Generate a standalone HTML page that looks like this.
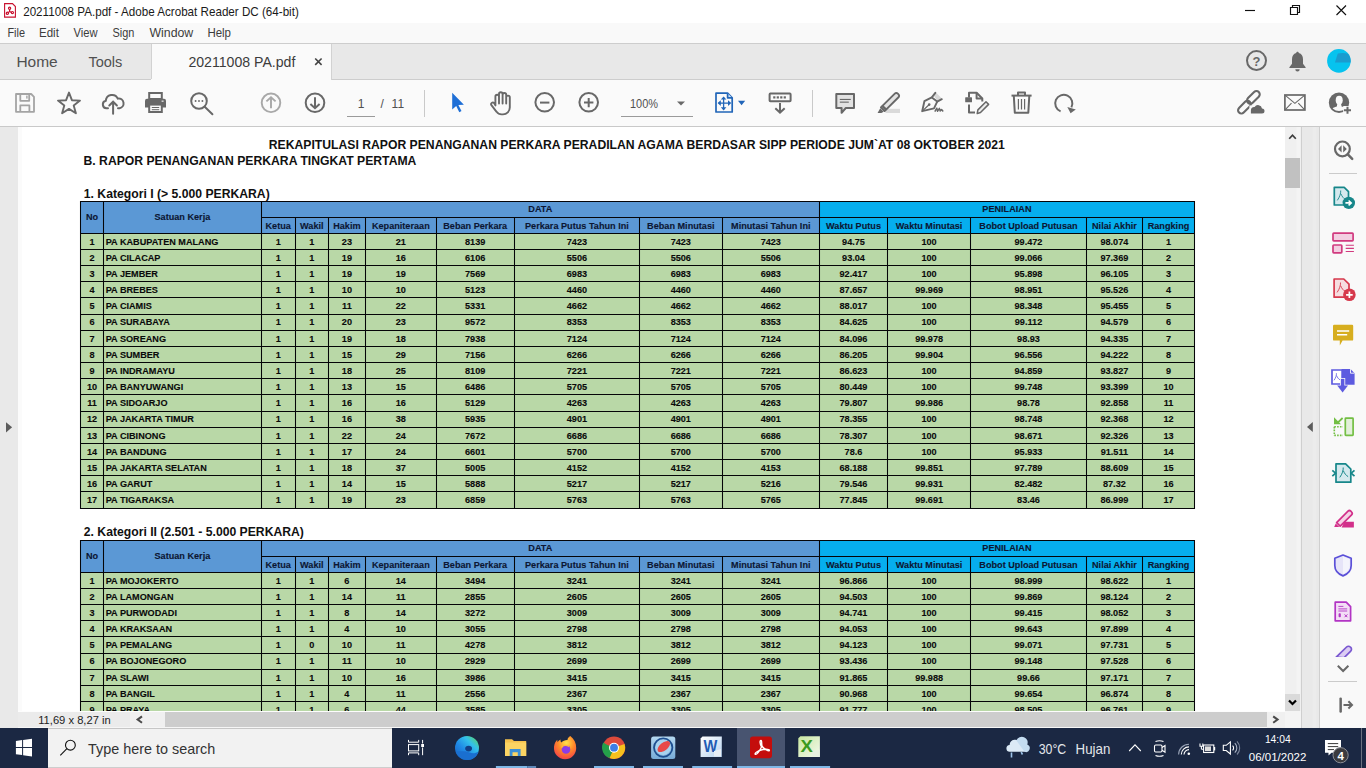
<!DOCTYPE html>
<html><head><meta charset="utf-8"><title>Acrobat</title>
<style>
html,body{margin:0;padding:0;width:1366px;height:768px;overflow:hidden;background:#fff}
svg{display:block}
</style></head><body>
<svg width="1366" height="768" viewBox="0 0 1366 768" font-family='"Liberation Sans", sans-serif'>
<rect x="0" y="0" width="1366" height="23" fill="#ffffff"/><rect x="0" y="23" width="1366" height="20" fill="#f9f9f9"/><rect x="0" y="43" width="1366" height="37" fill="#e8e8e8"/><rect x="0" y="43" width="1366" height="1" fill="#cdcdcd"/><rect x="0" y="79" width="1366" height="1" fill="#cdcdcd"/><rect x="151" y="44" width="181" height="37" fill="#fafafa"/><rect x="151" y="44" width="1" height="36" fill="#d2d2d2"/><rect x="331" y="44" width="1" height="36" fill="#d2d2d2"/><rect x="0" y="80" width="1366" height="46" fill="#fafafa"/><rect x="151" y="79" width="180" height="2" fill="#fafafa"/><rect x="0" y="126" width="1366" height="1" fill="#c9c9c9"/><rect x="0" y="127" width="18" height="601" fill="#e9e9e9"/><rect x="18" y="127" width="1267" height="584" fill="#ffffff"/><rect x="18" y="127" width="4" height="584" fill="#fbfbfb"/><rect x="1285" y="127" width="16" height="584" fill="#f0f0f0"/><rect x="1296.5" y="127" width="3.5" height="584" fill="#f4f4f4"/><rect x="1285" y="158" width="15" height="30" fill="#c1c1c1"/><rect x="1285" y="694" width="15" height="17" fill="#dadada"/><rect x="1301" y="127" width="1" height="601" fill="#cfcfcf"/><rect x="1302" y="127" width="17" height="601" fill="#e9e9e9"/><rect x="1312.5" y="127" width="4" height="601" fill="#ececec"/><rect x="1319" y="127" width="1" height="601" fill="#cfcfcf"/><rect x="1320" y="127" width="46" height="601" fill="#f9f9f9"/><rect x="18" y="711" width="1267" height="1" fill="#fdfdfd"/><rect x="18" y="712" width="112" height="16" fill="#ebebeb"/><rect x="130" y="712" width="35" height="16" fill="#f0f0f0"/><rect x="165" y="712" width="1102" height="15" fill="#cdcdcd"/><rect x="18" y="727" width="1283" height="1" fill="#f6f6f6"/><rect x="1267" y="712" width="18" height="16" fill="#f0f0f0"/><rect x="1285" y="711" width="16" height="17" fill="#f4f4f4"/><rect x="0" y="728" width="1366" height="40" fill="#1b2843"/><rect x="48" y="728" width="344" height="40" fill="#f2f2f2"/><rect x="48" y="728" width="344" height="1" fill="#c6c6c6"/><rect x="48" y="767" width="344" height="1" fill="#cdcdcd"/><g font-weight="700" font-size="12.2" fill="#111"><text x="636.8" y="149.3" text-anchor="middle">REKAPITULASI RAPOR PENANGANAN PERKARA PERADILAN AGAMA BERDASAR SIPP PERIODE JUM`AT 08 OKTOBER 2021</text><text x="83.5" y="164.6">B. RAPOR PENANGANAN PERKARA TINGKAT PERTAMA</text><text x="83.8" y="198">1. Kategori I (&gt; 5.000 PERKARA)</text><text x="83.8" y="535.6">2. Kategori II (2.501 - 5.000 PERKARA)</text></g><rect x="80.5" y="201.3" width="738.8" height="32.0" fill="#5b98d5"/><rect x="819.3" y="201.3" width="375.20000000000005" height="32.0" fill="#06aeee"/><rect x="80.5" y="233.3" width="1114.0" height="274.72" fill="#b9d8a7"/><path d="M80.5 201.5H1195.0M261.3 217.5H1195.0M80.5 233.5H1195.0M80.5 249.5H1195.0M80.5 265.5H1195.0M80.5 281.5H1195.0M80.5 297.5H1195.0M80.5 314.5H1195.0M80.5 330.5H1195.0M80.5 346.5H1195.0M80.5 362.5H1195.0M80.5 378.5H1195.0M80.5 394.5H1195.0M80.5 411.5H1195.0M80.5 427.5H1195.0M80.5 443.5H1195.0M80.5 459.5H1195.0M80.5 475.5H1195.0M80.5 491.5H1195.0M80.5 508.5H1195.0M80.5 201.0V509.0M103.5 201.0V509.0M261.5 201.0V509.0M295.5 217.5V509.0M328.5 217.5V509.0M365.5 217.5V509.0M436.5 217.5V509.0M514.5 217.5V509.0M639.5 217.5V509.0M722.5 217.5V509.0M819.5 201.0V509.0M887.5 217.5V509.0M970.5 217.5V509.0M1086.5 217.5V509.0M1142.5 217.5V509.0M1194.5 201.0V509.0" stroke="#050508" stroke-width="1.05" fill="none"/><g font-family='"Liberation Sans", sans-serif' font-weight="700" font-size="9.15" fill="#0c1633" stroke="#0c1633" stroke-width="0.12"><text x="92.0" y="220.0" text-anchor="middle">No</text><text x="182.4" y="220.0" text-anchor="middle">Satuan Kerja</text><text x="540.3" y="212.2" text-anchor="middle">DATA</text><text x="1006.9" y="212.2" text-anchor="middle">PENILAIAN</text><text x="278.2" y="229.2" text-anchor="middle">Ketua</text><text x="311.8" y="229.2" text-anchor="middle">Wakil</text><text x="346.9" y="229.2" text-anchor="middle">Hakim</text><text x="400.8" y="229.2" text-anchor="middle">Kepaniteraan</text><text x="475.2" y="229.2" text-anchor="middle">Beban Perkara</text><text x="576.9" y="229.2" text-anchor="middle">Perkara Putus Tahun Ini</text><text x="680.8" y="229.2" text-anchor="middle">Beban Minutasi</text><text x="770.8" y="229.2" text-anchor="middle">Minutasi Tahun Ini</text><text x="853.5" y="229.2" text-anchor="middle">Waktu Putus</text><text x="929.1" y="229.2" text-anchor="middle">Waktu Minutasi</text><text x="1028.5" y="229.2" text-anchor="middle">Bobot Upload Putusan</text><text x="1114.4" y="229.2" text-anchor="middle">Nilai Akhir</text><text x="1168.5" y="229.2" text-anchor="middle">Rangking</text></g><g font-family='"Liberation Sans", sans-serif' font-weight="700" font-size="9.15" fill="#0a0a0a" stroke="#0a0a0a" stroke-width="0.12"><text x="92.0" y="244.6" text-anchor="middle">1</text><text x="105.7" y="244.6" text-anchor="start">PA KABUPATEN MALANG</text><text x="278.2" y="244.6" text-anchor="middle">1</text><text x="311.8" y="244.6" text-anchor="middle">1</text><text x="346.9" y="244.6" text-anchor="middle">23</text><text x="400.8" y="244.6" text-anchor="middle">21</text><text x="475.2" y="244.6" text-anchor="middle">8139</text><text x="576.9" y="244.6" text-anchor="middle">7423</text><text x="680.8" y="244.6" text-anchor="middle">7423</text><text x="770.8" y="244.6" text-anchor="middle">7423</text><text x="853.5" y="244.6" text-anchor="middle">94.75</text><text x="929.1" y="244.6" text-anchor="middle">100</text><text x="1028.5" y="244.6" text-anchor="middle">99.472</text><text x="1114.4" y="244.6" text-anchor="middle">98.074</text><text x="1168.5" y="244.6" text-anchor="middle">1</text><text x="92.0" y="260.8" text-anchor="middle">2</text><text x="105.7" y="260.8" text-anchor="start">PA CILACAP</text><text x="278.2" y="260.8" text-anchor="middle">1</text><text x="311.8" y="260.8" text-anchor="middle">1</text><text x="346.9" y="260.8" text-anchor="middle">19</text><text x="400.8" y="260.8" text-anchor="middle">16</text><text x="475.2" y="260.8" text-anchor="middle">6106</text><text x="576.9" y="260.8" text-anchor="middle">5506</text><text x="680.8" y="260.8" text-anchor="middle">5506</text><text x="770.8" y="260.8" text-anchor="middle">5506</text><text x="853.5" y="260.8" text-anchor="middle">93.04</text><text x="929.1" y="260.8" text-anchor="middle">100</text><text x="1028.5" y="260.8" text-anchor="middle">99.066</text><text x="1114.4" y="260.8" text-anchor="middle">97.369</text><text x="1168.5" y="260.8" text-anchor="middle">2</text><text x="92.0" y="276.9" text-anchor="middle">3</text><text x="105.7" y="276.9" text-anchor="start">PA JEMBER</text><text x="278.2" y="276.9" text-anchor="middle">1</text><text x="311.8" y="276.9" text-anchor="middle">1</text><text x="346.9" y="276.9" text-anchor="middle">19</text><text x="400.8" y="276.9" text-anchor="middle">19</text><text x="475.2" y="276.9" text-anchor="middle">7569</text><text x="576.9" y="276.9" text-anchor="middle">6983</text><text x="680.8" y="276.9" text-anchor="middle">6983</text><text x="770.8" y="276.9" text-anchor="middle">6983</text><text x="853.5" y="276.9" text-anchor="middle">92.417</text><text x="929.1" y="276.9" text-anchor="middle">100</text><text x="1028.5" y="276.9" text-anchor="middle">95.898</text><text x="1114.4" y="276.9" text-anchor="middle">96.105</text><text x="1168.5" y="276.9" text-anchor="middle">3</text><text x="92.0" y="293.1" text-anchor="middle">4</text><text x="105.7" y="293.1" text-anchor="start">PA BREBES</text><text x="278.2" y="293.1" text-anchor="middle">1</text><text x="311.8" y="293.1" text-anchor="middle">1</text><text x="346.9" y="293.1" text-anchor="middle">10</text><text x="400.8" y="293.1" text-anchor="middle">10</text><text x="475.2" y="293.1" text-anchor="middle">5123</text><text x="576.9" y="293.1" text-anchor="middle">4460</text><text x="680.8" y="293.1" text-anchor="middle">4460</text><text x="770.8" y="293.1" text-anchor="middle">4460</text><text x="853.5" y="293.1" text-anchor="middle">87.657</text><text x="929.1" y="293.1" text-anchor="middle">99.969</text><text x="1028.5" y="293.1" text-anchor="middle">98.951</text><text x="1114.4" y="293.1" text-anchor="middle">95.526</text><text x="1168.5" y="293.1" text-anchor="middle">4</text><text x="92.0" y="309.2" text-anchor="middle">5</text><text x="105.7" y="309.2" text-anchor="start">PA CIAMIS</text><text x="278.2" y="309.2" text-anchor="middle">1</text><text x="311.8" y="309.2" text-anchor="middle">1</text><text x="346.9" y="309.2" text-anchor="middle">11</text><text x="400.8" y="309.2" text-anchor="middle">22</text><text x="475.2" y="309.2" text-anchor="middle">5331</text><text x="576.9" y="309.2" text-anchor="middle">4662</text><text x="680.8" y="309.2" text-anchor="middle">4662</text><text x="770.8" y="309.2" text-anchor="middle">4662</text><text x="853.5" y="309.2" text-anchor="middle">88.017</text><text x="929.1" y="309.2" text-anchor="middle">100</text><text x="1028.5" y="309.2" text-anchor="middle">98.348</text><text x="1114.4" y="309.2" text-anchor="middle">95.455</text><text x="1168.5" y="309.2" text-anchor="middle">5</text><text x="92.0" y="325.4" text-anchor="middle">6</text><text x="105.7" y="325.4" text-anchor="start">PA SURABAYA</text><text x="278.2" y="325.4" text-anchor="middle">1</text><text x="311.8" y="325.4" text-anchor="middle">1</text><text x="346.9" y="325.4" text-anchor="middle">20</text><text x="400.8" y="325.4" text-anchor="middle">23</text><text x="475.2" y="325.4" text-anchor="middle">9572</text><text x="576.9" y="325.4" text-anchor="middle">8353</text><text x="680.8" y="325.4" text-anchor="middle">8353</text><text x="770.8" y="325.4" text-anchor="middle">8353</text><text x="853.5" y="325.4" text-anchor="middle">84.625</text><text x="929.1" y="325.4" text-anchor="middle">100</text><text x="1028.5" y="325.4" text-anchor="middle">99.112</text><text x="1114.4" y="325.4" text-anchor="middle">94.579</text><text x="1168.5" y="325.4" text-anchor="middle">6</text><text x="92.0" y="341.6" text-anchor="middle">7</text><text x="105.7" y="341.6" text-anchor="start">PA SOREANG</text><text x="278.2" y="341.6" text-anchor="middle">1</text><text x="311.8" y="341.6" text-anchor="middle">1</text><text x="346.9" y="341.6" text-anchor="middle">19</text><text x="400.8" y="341.6" text-anchor="middle">18</text><text x="475.2" y="341.6" text-anchor="middle">7938</text><text x="576.9" y="341.6" text-anchor="middle">7124</text><text x="680.8" y="341.6" text-anchor="middle">7124</text><text x="770.8" y="341.6" text-anchor="middle">7124</text><text x="853.5" y="341.6" text-anchor="middle">84.096</text><text x="929.1" y="341.6" text-anchor="middle">99.978</text><text x="1028.5" y="341.6" text-anchor="middle">98.93</text><text x="1114.4" y="341.6" text-anchor="middle">94.335</text><text x="1168.5" y="341.6" text-anchor="middle">7</text><text x="92.0" y="357.7" text-anchor="middle">8</text><text x="105.7" y="357.7" text-anchor="start">PA SUMBER</text><text x="278.2" y="357.7" text-anchor="middle">1</text><text x="311.8" y="357.7" text-anchor="middle">1</text><text x="346.9" y="357.7" text-anchor="middle">15</text><text x="400.8" y="357.7" text-anchor="middle">29</text><text x="475.2" y="357.7" text-anchor="middle">7156</text><text x="576.9" y="357.7" text-anchor="middle">6266</text><text x="680.8" y="357.7" text-anchor="middle">6266</text><text x="770.8" y="357.7" text-anchor="middle">6266</text><text x="853.5" y="357.7" text-anchor="middle">86.205</text><text x="929.1" y="357.7" text-anchor="middle">99.904</text><text x="1028.5" y="357.7" text-anchor="middle">96.556</text><text x="1114.4" y="357.7" text-anchor="middle">94.222</text><text x="1168.5" y="357.7" text-anchor="middle">8</text><text x="92.0" y="373.9" text-anchor="middle">9</text><text x="105.7" y="373.9" text-anchor="start">PA INDRAMAYU</text><text x="278.2" y="373.9" text-anchor="middle">1</text><text x="311.8" y="373.9" text-anchor="middle">1</text><text x="346.9" y="373.9" text-anchor="middle">18</text><text x="400.8" y="373.9" text-anchor="middle">25</text><text x="475.2" y="373.9" text-anchor="middle">8109</text><text x="576.9" y="373.9" text-anchor="middle">7221</text><text x="680.8" y="373.9" text-anchor="middle">7221</text><text x="770.8" y="373.9" text-anchor="middle">7221</text><text x="853.5" y="373.9" text-anchor="middle">86.623</text><text x="929.1" y="373.9" text-anchor="middle">100</text><text x="1028.5" y="373.9" text-anchor="middle">94.859</text><text x="1114.4" y="373.9" text-anchor="middle">93.827</text><text x="1168.5" y="373.9" text-anchor="middle">9</text><text x="92.0" y="390.0" text-anchor="middle">10</text><text x="105.7" y="390.0" text-anchor="start">PA BANYUWANGI</text><text x="278.2" y="390.0" text-anchor="middle">1</text><text x="311.8" y="390.0" text-anchor="middle">1</text><text x="346.9" y="390.0" text-anchor="middle">13</text><text x="400.8" y="390.0" text-anchor="middle">15</text><text x="475.2" y="390.0" text-anchor="middle">6486</text><text x="576.9" y="390.0" text-anchor="middle">5705</text><text x="680.8" y="390.0" text-anchor="middle">5705</text><text x="770.8" y="390.0" text-anchor="middle">5705</text><text x="853.5" y="390.0" text-anchor="middle">80.449</text><text x="929.1" y="390.0" text-anchor="middle">100</text><text x="1028.5" y="390.0" text-anchor="middle">99.748</text><text x="1114.4" y="390.0" text-anchor="middle">93.399</text><text x="1168.5" y="390.0" text-anchor="middle">10</text><text x="92.0" y="406.2" text-anchor="middle">11</text><text x="105.7" y="406.2" text-anchor="start">PA SIDOARJO</text><text x="278.2" y="406.2" text-anchor="middle">1</text><text x="311.8" y="406.2" text-anchor="middle">1</text><text x="346.9" y="406.2" text-anchor="middle">16</text><text x="400.8" y="406.2" text-anchor="middle">16</text><text x="475.2" y="406.2" text-anchor="middle">5129</text><text x="576.9" y="406.2" text-anchor="middle">4263</text><text x="680.8" y="406.2" text-anchor="middle">4263</text><text x="770.8" y="406.2" text-anchor="middle">4263</text><text x="853.5" y="406.2" text-anchor="middle">79.807</text><text x="929.1" y="406.2" text-anchor="middle">99.986</text><text x="1028.5" y="406.2" text-anchor="middle">98.78</text><text x="1114.4" y="406.2" text-anchor="middle">92.858</text><text x="1168.5" y="406.2" text-anchor="middle">11</text><text x="92.0" y="422.4" text-anchor="middle">12</text><text x="105.7" y="422.4" text-anchor="start">PA JAKARTA TIMUR</text><text x="278.2" y="422.4" text-anchor="middle">1</text><text x="311.8" y="422.4" text-anchor="middle">1</text><text x="346.9" y="422.4" text-anchor="middle">16</text><text x="400.8" y="422.4" text-anchor="middle">38</text><text x="475.2" y="422.4" text-anchor="middle">5935</text><text x="576.9" y="422.4" text-anchor="middle">4901</text><text x="680.8" y="422.4" text-anchor="middle">4901</text><text x="770.8" y="422.4" text-anchor="middle">4901</text><text x="853.5" y="422.4" text-anchor="middle">78.355</text><text x="929.1" y="422.4" text-anchor="middle">100</text><text x="1028.5" y="422.4" text-anchor="middle">98.748</text><text x="1114.4" y="422.4" text-anchor="middle">92.368</text><text x="1168.5" y="422.4" text-anchor="middle">12</text><text x="92.0" y="438.5" text-anchor="middle">13</text><text x="105.7" y="438.5" text-anchor="start">PA CIBINONG</text><text x="278.2" y="438.5" text-anchor="middle">1</text><text x="311.8" y="438.5" text-anchor="middle">1</text><text x="346.9" y="438.5" text-anchor="middle">22</text><text x="400.8" y="438.5" text-anchor="middle">24</text><text x="475.2" y="438.5" text-anchor="middle">7672</text><text x="576.9" y="438.5" text-anchor="middle">6686</text><text x="680.8" y="438.5" text-anchor="middle">6686</text><text x="770.8" y="438.5" text-anchor="middle">6686</text><text x="853.5" y="438.5" text-anchor="middle">78.307</text><text x="929.1" y="438.5" text-anchor="middle">100</text><text x="1028.5" y="438.5" text-anchor="middle">98.671</text><text x="1114.4" y="438.5" text-anchor="middle">92.326</text><text x="1168.5" y="438.5" text-anchor="middle">13</text><text x="92.0" y="454.7" text-anchor="middle">14</text><text x="105.7" y="454.7" text-anchor="start">PA BANDUNG</text><text x="278.2" y="454.7" text-anchor="middle">1</text><text x="311.8" y="454.7" text-anchor="middle">1</text><text x="346.9" y="454.7" text-anchor="middle">17</text><text x="400.8" y="454.7" text-anchor="middle">24</text><text x="475.2" y="454.7" text-anchor="middle">6601</text><text x="576.9" y="454.7" text-anchor="middle">5700</text><text x="680.8" y="454.7" text-anchor="middle">5700</text><text x="770.8" y="454.7" text-anchor="middle">5700</text><text x="853.5" y="454.7" text-anchor="middle">78.6</text><text x="929.1" y="454.7" text-anchor="middle">100</text><text x="1028.5" y="454.7" text-anchor="middle">95.933</text><text x="1114.4" y="454.7" text-anchor="middle">91.511</text><text x="1168.5" y="454.7" text-anchor="middle">14</text><text x="92.0" y="470.8" text-anchor="middle">15</text><text x="105.7" y="470.8" text-anchor="start">PA JAKARTA SELATAN</text><text x="278.2" y="470.8" text-anchor="middle">1</text><text x="311.8" y="470.8" text-anchor="middle">1</text><text x="346.9" y="470.8" text-anchor="middle">18</text><text x="400.8" y="470.8" text-anchor="middle">37</text><text x="475.2" y="470.8" text-anchor="middle">5005</text><text x="576.9" y="470.8" text-anchor="middle">4152</text><text x="680.8" y="470.8" text-anchor="middle">4152</text><text x="770.8" y="470.8" text-anchor="middle">4153</text><text x="853.5" y="470.8" text-anchor="middle">68.188</text><text x="929.1" y="470.8" text-anchor="middle">99.851</text><text x="1028.5" y="470.8" text-anchor="middle">97.789</text><text x="1114.4" y="470.8" text-anchor="middle">88.609</text><text x="1168.5" y="470.8" text-anchor="middle">15</text><text x="92.0" y="487.0" text-anchor="middle">16</text><text x="105.7" y="487.0" text-anchor="start">PA GARUT</text><text x="278.2" y="487.0" text-anchor="middle">1</text><text x="311.8" y="487.0" text-anchor="middle">1</text><text x="346.9" y="487.0" text-anchor="middle">14</text><text x="400.8" y="487.0" text-anchor="middle">15</text><text x="475.2" y="487.0" text-anchor="middle">5888</text><text x="576.9" y="487.0" text-anchor="middle">5217</text><text x="680.8" y="487.0" text-anchor="middle">5217</text><text x="770.8" y="487.0" text-anchor="middle">5216</text><text x="853.5" y="487.0" text-anchor="middle">79.546</text><text x="929.1" y="487.0" text-anchor="middle">99.931</text><text x="1028.5" y="487.0" text-anchor="middle">82.482</text><text x="1114.4" y="487.0" text-anchor="middle">87.32</text><text x="1168.5" y="487.0" text-anchor="middle">16</text><text x="92.0" y="503.2" text-anchor="middle">17</text><text x="105.7" y="503.2" text-anchor="start">PA TIGARAKSA</text><text x="278.2" y="503.2" text-anchor="middle">1</text><text x="311.8" y="503.2" text-anchor="middle">1</text><text x="346.9" y="503.2" text-anchor="middle">19</text><text x="400.8" y="503.2" text-anchor="middle">23</text><text x="475.2" y="503.2" text-anchor="middle">6859</text><text x="576.9" y="503.2" text-anchor="middle">5763</text><text x="680.8" y="503.2" text-anchor="middle">5763</text><text x="770.8" y="503.2" text-anchor="middle">5765</text><text x="853.5" y="503.2" text-anchor="middle">77.845</text><text x="929.1" y="503.2" text-anchor="middle">99.691</text><text x="1028.5" y="503.2" text-anchor="middle">83.46</text><text x="1114.4" y="503.2" text-anchor="middle">86.999</text><text x="1168.5" y="503.2" text-anchor="middle">17</text></g><svg x="0" y="127" width="1285" height="584" overflow="hidden"><g transform="translate(0,-127)"><rect x="80.5" y="540.3" width="738.8" height="32.0" fill="#5b98d5"/><rect x="819.3" y="540.3" width="375.20000000000005" height="32.0" fill="#06aeee"/><rect x="80.5" y="572.3" width="1114.0" height="145.44000000000005" fill="#b9d8a7"/><path d="M80.5 540.5H1195.0M261.3 556.5H1195.0M80.5 572.5H1195.0M80.5 588.5H1195.0M80.5 604.5H1195.0M80.5 620.5H1195.0M80.5 636.5H1195.0M80.5 653.5H1195.0M80.5 669.5H1195.0M80.5 685.5H1195.0M80.5 701.5H1195.0M80.5 717.5H1195.0M80.5 540.0V718.0M103.5 540.0V718.0M261.5 540.0V718.0M295.5 556.5V718.0M328.5 556.5V718.0M365.5 556.5V718.0M436.5 556.5V718.0M514.5 556.5V718.0M639.5 556.5V718.0M722.5 556.5V718.0M819.5 540.0V718.0M887.5 556.5V718.0M970.5 556.5V718.0M1086.5 556.5V718.0M1142.5 556.5V718.0M1194.5 540.0V718.0" stroke="#050508" stroke-width="1.05" fill="none"/><g font-family='"Liberation Sans", sans-serif' font-weight="700" font-size="9.15" fill="#0c1633" stroke="#0c1633" stroke-width="0.12"><text x="92.0" y="559.0" text-anchor="middle">No</text><text x="182.4" y="559.0" text-anchor="middle">Satuan Kerja</text><text x="540.3" y="551.2" text-anchor="middle">DATA</text><text x="1006.9" y="551.2" text-anchor="middle">PENILAIAN</text><text x="278.2" y="568.2" text-anchor="middle">Ketua</text><text x="311.8" y="568.2" text-anchor="middle">Wakil</text><text x="346.9" y="568.2" text-anchor="middle">Hakim</text><text x="400.8" y="568.2" text-anchor="middle">Kepaniteraan</text><text x="475.2" y="568.2" text-anchor="middle">Beban Perkara</text><text x="576.9" y="568.2" text-anchor="middle">Perkara Putus Tahun Ini</text><text x="680.8" y="568.2" text-anchor="middle">Beban Minutasi</text><text x="770.8" y="568.2" text-anchor="middle">Minutasi Tahun Ini</text><text x="853.5" y="568.2" text-anchor="middle">Waktu Putus</text><text x="929.1" y="568.2" text-anchor="middle">Waktu Minutasi</text><text x="1028.5" y="568.2" text-anchor="middle">Bobot Upload Putusan</text><text x="1114.4" y="568.2" text-anchor="middle">Nilai Akhir</text><text x="1168.5" y="568.2" text-anchor="middle">Rangking</text></g><g font-family='"Liberation Sans", sans-serif' font-weight="700" font-size="9.15" fill="#0a0a0a" stroke="#0a0a0a" stroke-width="0.12"><text x="92.0" y="583.6" text-anchor="middle">1</text><text x="105.7" y="583.6" text-anchor="start">PA MOJOKERTO</text><text x="278.2" y="583.6" text-anchor="middle">1</text><text x="311.8" y="583.6" text-anchor="middle">1</text><text x="346.9" y="583.6" text-anchor="middle">6</text><text x="400.8" y="583.6" text-anchor="middle">14</text><text x="475.2" y="583.6" text-anchor="middle">3494</text><text x="576.9" y="583.6" text-anchor="middle">3241</text><text x="680.8" y="583.6" text-anchor="middle">3241</text><text x="770.8" y="583.6" text-anchor="middle">3241</text><text x="853.5" y="583.6" text-anchor="middle">96.866</text><text x="929.1" y="583.6" text-anchor="middle">100</text><text x="1028.5" y="583.6" text-anchor="middle">98.999</text><text x="1114.4" y="583.6" text-anchor="middle">98.622</text><text x="1168.5" y="583.6" text-anchor="middle">1</text><text x="92.0" y="599.8" text-anchor="middle">2</text><text x="105.7" y="599.8" text-anchor="start">PA LAMONGAN</text><text x="278.2" y="599.8" text-anchor="middle">1</text><text x="311.8" y="599.8" text-anchor="middle">1</text><text x="346.9" y="599.8" text-anchor="middle">14</text><text x="400.8" y="599.8" text-anchor="middle">11</text><text x="475.2" y="599.8" text-anchor="middle">2855</text><text x="576.9" y="599.8" text-anchor="middle">2605</text><text x="680.8" y="599.8" text-anchor="middle">2605</text><text x="770.8" y="599.8" text-anchor="middle">2605</text><text x="853.5" y="599.8" text-anchor="middle">94.503</text><text x="929.1" y="599.8" text-anchor="middle">100</text><text x="1028.5" y="599.8" text-anchor="middle">99.869</text><text x="1114.4" y="599.8" text-anchor="middle">98.124</text><text x="1168.5" y="599.8" text-anchor="middle">2</text><text x="92.0" y="615.9" text-anchor="middle">3</text><text x="105.7" y="615.9" text-anchor="start">PA PURWODADI</text><text x="278.2" y="615.9" text-anchor="middle">1</text><text x="311.8" y="615.9" text-anchor="middle">1</text><text x="346.9" y="615.9" text-anchor="middle">8</text><text x="400.8" y="615.9" text-anchor="middle">14</text><text x="475.2" y="615.9" text-anchor="middle">3272</text><text x="576.9" y="615.9" text-anchor="middle">3009</text><text x="680.8" y="615.9" text-anchor="middle">3009</text><text x="770.8" y="615.9" text-anchor="middle">3009</text><text x="853.5" y="615.9" text-anchor="middle">94.741</text><text x="929.1" y="615.9" text-anchor="middle">100</text><text x="1028.5" y="615.9" text-anchor="middle">99.415</text><text x="1114.4" y="615.9" text-anchor="middle">98.052</text><text x="1168.5" y="615.9" text-anchor="middle">3</text><text x="92.0" y="632.1" text-anchor="middle">4</text><text x="105.7" y="632.1" text-anchor="start">PA KRAKSAAN</text><text x="278.2" y="632.1" text-anchor="middle">1</text><text x="311.8" y="632.1" text-anchor="middle">1</text><text x="346.9" y="632.1" text-anchor="middle">4</text><text x="400.8" y="632.1" text-anchor="middle">10</text><text x="475.2" y="632.1" text-anchor="middle">3055</text><text x="576.9" y="632.1" text-anchor="middle">2798</text><text x="680.8" y="632.1" text-anchor="middle">2798</text><text x="770.8" y="632.1" text-anchor="middle">2798</text><text x="853.5" y="632.1" text-anchor="middle">94.053</text><text x="929.1" y="632.1" text-anchor="middle">100</text><text x="1028.5" y="632.1" text-anchor="middle">99.643</text><text x="1114.4" y="632.1" text-anchor="middle">97.899</text><text x="1168.5" y="632.1" text-anchor="middle">4</text><text x="92.0" y="648.2" text-anchor="middle">5</text><text x="105.7" y="648.2" text-anchor="start">PA PEMALANG</text><text x="278.2" y="648.2" text-anchor="middle">1</text><text x="311.8" y="648.2" text-anchor="middle">0</text><text x="346.9" y="648.2" text-anchor="middle">10</text><text x="400.8" y="648.2" text-anchor="middle">11</text><text x="475.2" y="648.2" text-anchor="middle">4278</text><text x="576.9" y="648.2" text-anchor="middle">3812</text><text x="680.8" y="648.2" text-anchor="middle">3812</text><text x="770.8" y="648.2" text-anchor="middle">3812</text><text x="853.5" y="648.2" text-anchor="middle">94.123</text><text x="929.1" y="648.2" text-anchor="middle">100</text><text x="1028.5" y="648.2" text-anchor="middle">99.071</text><text x="1114.4" y="648.2" text-anchor="middle">97.731</text><text x="1168.5" y="648.2" text-anchor="middle">5</text><text x="92.0" y="664.4" text-anchor="middle">6</text><text x="105.7" y="664.4" text-anchor="start">PA BOJONEGORO</text><text x="278.2" y="664.4" text-anchor="middle">1</text><text x="311.8" y="664.4" text-anchor="middle">1</text><text x="346.9" y="664.4" text-anchor="middle">11</text><text x="400.8" y="664.4" text-anchor="middle">10</text><text x="475.2" y="664.4" text-anchor="middle">2929</text><text x="576.9" y="664.4" text-anchor="middle">2699</text><text x="680.8" y="664.4" text-anchor="middle">2699</text><text x="770.8" y="664.4" text-anchor="middle">2699</text><text x="853.5" y="664.4" text-anchor="middle">93.436</text><text x="929.1" y="664.4" text-anchor="middle">100</text><text x="1028.5" y="664.4" text-anchor="middle">99.148</text><text x="1114.4" y="664.4" text-anchor="middle">97.528</text><text x="1168.5" y="664.4" text-anchor="middle">6</text><text x="92.0" y="680.6" text-anchor="middle">7</text><text x="105.7" y="680.6" text-anchor="start">PA SLAWI</text><text x="278.2" y="680.6" text-anchor="middle">1</text><text x="311.8" y="680.6" text-anchor="middle">1</text><text x="346.9" y="680.6" text-anchor="middle">10</text><text x="400.8" y="680.6" text-anchor="middle">16</text><text x="475.2" y="680.6" text-anchor="middle">3986</text><text x="576.9" y="680.6" text-anchor="middle">3415</text><text x="680.8" y="680.6" text-anchor="middle">3415</text><text x="770.8" y="680.6" text-anchor="middle">3415</text><text x="853.5" y="680.6" text-anchor="middle">91.865</text><text x="929.1" y="680.6" text-anchor="middle">99.988</text><text x="1028.5" y="680.6" text-anchor="middle">99.66</text><text x="1114.4" y="680.6" text-anchor="middle">97.171</text><text x="1168.5" y="680.6" text-anchor="middle">7</text><text x="92.0" y="696.7" text-anchor="middle">8</text><text x="105.7" y="696.7" text-anchor="start">PA BANGIL</text><text x="278.2" y="696.7" text-anchor="middle">1</text><text x="311.8" y="696.7" text-anchor="middle">1</text><text x="346.9" y="696.7" text-anchor="middle">4</text><text x="400.8" y="696.7" text-anchor="middle">11</text><text x="475.2" y="696.7" text-anchor="middle">2556</text><text x="576.9" y="696.7" text-anchor="middle">2367</text><text x="680.8" y="696.7" text-anchor="middle">2367</text><text x="770.8" y="696.7" text-anchor="middle">2367</text><text x="853.5" y="696.7" text-anchor="middle">90.968</text><text x="929.1" y="696.7" text-anchor="middle">100</text><text x="1028.5" y="696.7" text-anchor="middle">99.654</text><text x="1114.4" y="696.7" text-anchor="middle">96.874</text><text x="1168.5" y="696.7" text-anchor="middle">8</text><text x="92.0" y="712.9" text-anchor="middle">9</text><text x="105.7" y="712.9" text-anchor="start">PA PRAYA</text><text x="278.2" y="712.9" text-anchor="middle">1</text><text x="311.8" y="712.9" text-anchor="middle">1</text><text x="346.9" y="712.9" text-anchor="middle">6</text><text x="400.8" y="712.9" text-anchor="middle">44</text><text x="475.2" y="712.9" text-anchor="middle">3585</text><text x="576.9" y="712.9" text-anchor="middle">3305</text><text x="680.8" y="712.9" text-anchor="middle">3305</text><text x="770.8" y="712.9" text-anchor="middle">3305</text><text x="853.5" y="712.9" text-anchor="middle">91.777</text><text x="929.1" y="712.9" text-anchor="middle">100</text><text x="1028.5" y="712.9" text-anchor="middle">98.505</text><text x="1114.4" y="712.9" text-anchor="middle">96.761</text><text x="1168.5" y="712.9" text-anchor="middle">9</text></g></g></svg><g fill="none" stroke="#c8102e" stroke-width="1.1"><path d="M4.6 3.6H12.5L15.4 6.5V17.1H4.6Z"/></g><g fill="none" stroke="#c8102e" stroke-width="1.2"><circle cx="9.6" cy="8.3" r="1.1"/><circle cx="7.4" cy="13.2" r="1.1"/><circle cx="12.4" cy="12.6" r="1.1"/><path d="M9.6 9.4V11.5L8.2 12.6M9.6 11.5L11.4 12.4"/></g><g stroke="#111" stroke-width="1.15" fill="none"><path d="M1245 10.5H1255"/><path d="M1290.5 7.5h7v7h-7z M1292.5 7.5V5.5h7v7h-2"/><path d="M1336.5 5.5L1346 15M1346 5.5L1336.5 15"/></g><g stroke="#444" stroke-width="1.6"><path d="M315.2 58.5L321.6 64.9M321.6 58.5L315.2 64.9"/></g><circle cx="1256.5" cy="60.6" r="9.5" fill="none" stroke="#686868" stroke-width="2"/><text x="1256.5" y="65.6" font-size="13" font-weight="700" fill="#686868" text-anchor="middle">?</text><path d="M1297.5 51.8c-0.8 0-1.3 0.6-1.3 1.3c-2.8 0.7-4.2 3.2-4.2 6.2v4.5l-2.6 3.4v0.9h16.2v-0.9l-2.6-3.4v-4.5c0-3-1.4-5.5-4.2-6.2c0-0.7-0.5-1.3-1.3-1.3zM1295.3 69.2a2.2 2.2 0 0 0 4.4 0z" fill="#686868"/><circle cx="1338.9" cy="60.9" r="11.8" fill="#06c3ef"/><path d="M1335 62.5L1337.8 53.6Q1343 52.2 1348 53.8A11.8 11.8 0 0 1 1350.6 62.5Z" fill="#1a9ccf"/><g fill="none" stroke="#a4a4a4" stroke-width="1.8" stroke-linejoin="round"><path d="M16 94H31.2L34 96.8V111.8H16Z"/><path d="M20.3 94V100.8H29.2V94"/><path d="M20.3 111.8V105.4H29.4V111.8"/></g><rect x="26.2" y="95.6" width="1.4" height="3" fill="#a4a4a4"/><path d="M69 92.6L71.9 100.2L80 100.6L73.7 105.6L75.9 113.3L69 108.9L62.1 113.3L64.3 105.6L58 100.6L66.1 100.2Z" fill="none" stroke="#686868" stroke-width="1.9" stroke-linejoin="round"/><g fill="none" stroke="#686868" stroke-width="2" stroke-linecap="round"><path d="M108 108.3H106.5A3.8 3.8 0 0 1 105.8 100.8A6.3 6.3 0 0 1 117.8 98.6A4.9 4.9 0 0 1 119.5 108.3H118"/><path d="M113.1 113.8V101.8M109.3 105.5L113.1 101.7L116.9 105.5"/></g><rect x="149.2" y="93" width="12.6" height="6" fill="none" stroke="#686868" stroke-width="2"/><path d="M147 98.8h17a2 2 0 0 1 2 2v6.6h-20.6h-0.4v-6.6a2 2 0 0 1 2-2z" fill="#686868"/><rect x="149.2" y="104.6" width="12.6" height="7.4" fill="#fafafa" stroke="#686868" stroke-width="2"/><g fill="#686868"><rect x="151.8" y="107" width="7.4" height="1"/><rect x="151.8" y="109.2" width="7.4" height="1"/></g><rect x="161.6" y="100.6" width="2" height="1.1" fill="#fafafa"/><g fill="none" stroke="#686868" stroke-width="2"><circle cx="199" cy="101" r="7.8"/><path d="M204.7 106.8L212.4 114.2" stroke-linecap="round"/></g><g fill="#686868"><circle cx="195.6" cy="101" r="0.95"/><circle cx="199" cy="101" r="0.95"/><circle cx="202.4" cy="101" r="0.95"/></g><g fill="none" stroke="#a8a8a8" stroke-width="1.9"><circle cx="271" cy="102.8" r="9.3"/><path d="M271 108.2V97.2M266.4 101.4L271 97.2L275.6 101.4"/></g><g fill="none" stroke="#686868" stroke-width="2"><circle cx="315" cy="102.8" r="9.3"/><path d="M315 97.2V108.2M310.4 104L315 108.2L319.6 104"/></g><rect x="347" y="116" width="28" height="1" fill="#9a9a9a"/><rect x="424" y="90" width="1" height="27" fill="#c9c9c9"/><rect x="812" y="90" width="1" height="27" fill="#c9c9c9"/><path d="M452.2 92.7L463.9 104.7L458.4 104.9L461.5 111.1L459.3 112.2L456.2 106.1L452.2 109.6Z" fill="#1f6fd6"/><path d="M495.4 105.4V96.6a1.8 1.8 0 0 1 3.6 0V103.5V94a1.8 1.8 0 0 1 3.6 0V103.5V94.8a1.8 1.8 0 0 1 3.6 0V103.5V97.4a1.8 1.8 0 0 1 3.6 0V107.6a6.8 6.8 0 0 1-6.8 6.8h-1.4c-2.3 0-3.9-1-5-2.6l-5.2-6.6a1.75 1.75 0 0 1 2.7-2.2z" fill="none" stroke="#686868" stroke-width="1.9" stroke-linejoin="round"/><g fill="none" stroke="#686868" stroke-width="2"><circle cx="544.7" cy="102.3" r="9.3"/><path d="M540 102.6H549.4"/><circle cx="588.7" cy="102.3" r="9.3"/><path d="M584 102.6H593.4M588.7 97.9V107.3"/></g><path d="M677 101.6H685L681 105.6Z" fill="#686868"/><rect x="621" y="116" width="72" height="1" fill="#9a9a9a"/><g fill="none" stroke="#2165b8" stroke-width="1.7" stroke-linejoin="round"><path d="M716 93.2H727.6L732.2 97.8V112H716Z"/><path d="M727.6 93.2V97.8H732.2" fill="#cfe3f7"/></g><g fill="none" stroke="#2165b8" stroke-width="1.3"><path d="M723.6 97.5V109.4M718.6 103.1H730.2"/></g><g fill="#2165b8"><path d="M723.6 96.4L720.8 99.6H726.4Z M723.6 110.4L720.8 107.2H726.4Z M717.6 103.1L720.8 100.3V105.9Z M731.2 103.1L728 100.3V105.9Z"/><path d="M738 100.8H745.2L741.6 105.2Z"/></g><g fill="none" stroke="#686868" stroke-width="2"><rect x="769.6" y="93.6" width="21" height="7.6" rx="0.8"/><path d="M780 103V112.5M775.3 108.2L780 112.6L784.7 108.2"/></g><g fill="#686868"><rect x="773.2" y="96.3" width="2.2" height="2.2"/><rect x="776.7" y="96.3" width="2.2" height="2.2"/><rect x="780.2" y="96.3" width="2.2" height="2.2"/><rect x="783.7" y="96.3" width="2.2" height="2.2"/></g><path d="M836.3 94.1H854V108H845.8L841.6 112.8V108H836.3Z" fill="#e2e2e2" stroke="#686868" stroke-width="2" stroke-linejoin="round"/><g fill="#686868"><rect x="839.8" y="98.9" width="11" height="1.1"/><rect x="839.8" y="101.6" width="9" height="1.1"/></g><rect x="885.5" y="108.8" width="14.5" height="4.2" fill="#dadada"/><path d="M880.9 107.4L894.8 93.6a2.1 2.1 0 0 1 3 0l0.7 0.7a2.1 2.1 0 0 1 0 3L884.6 111.1Z" fill="#e4e4e4" stroke="#686868" stroke-width="1.9" stroke-linejoin="round"/><path d="M880.2 108.3L883.7 111.8L881.4 113H877.6Z" fill="#686868"/><path d="M882.2 105.8L886.3 109.9" stroke="#686868" stroke-width="2.4"/><path d="M933.5 95.5L936 92.6L942.6 99.2L938.6 102Z" fill="#d8d8d8"/><g fill="none" stroke="#686868" stroke-width="1.9" stroke-linejoin="round" stroke-linecap="round"><path d="M922.2 111.2L924.4 101.2L931.8 97.4L937.2 101.6L934 108.4Z"/><path d="M932.2 96.8L935.3 92.8"/><path d="M937.2 101.6L941.8 99.2"/><path d="M922.8 110.6L929 104.8" stroke-width="1.2"/></g><circle cx="929.2" cy="104.6" r="1.3" fill="#686868"/><path d="M934.8 111.6L936.8 108.2L937.6 111.2L939.4 108.4L940.2 111L941.6 109.6L943.2 111.4" fill="none" stroke="#686868" stroke-width="1.5" stroke-linejoin="round"/><g fill="none" stroke="#686868" stroke-width="2" stroke-linejoin="round"><path d="M969 97.5V92.8H976.6L982.3 98.5V101.6"/><path d="M976.6 92.8V98.5H982.3"/><path d="M969 104.5V112.6H975"/></g><rect x="965.2" y="97.2" width="6.8" height="5.1" rx="0.6" fill="#686868"/><path d="M977.2 113.6L977.9 109.9L986 101.8L988.6 104.4L980.5 112.5Z" fill="#eee" stroke="#686868" stroke-width="1.5" stroke-linejoin="round"/><g fill="none" stroke="#686868" stroke-width="2" stroke-linejoin="round"><path d="M1011.5 95.6H1031.6"/><path d="M1018 95.4V92.6H1025V95.4"/><path d="M1013.8 95.8L1014.8 112.8H1028.3L1029.3 95.8"/></g><g stroke="#686868" stroke-width="1.2"><path d="M1018.4 99V109.4M1021.5 99V109.4M1024.6 99V109.4"/></g><path d="M1060.6 111.4A8.6 8.6 0 1 1 1071.4 107.4" fill="none" stroke="#686868" stroke-width="2"/><path d="M1067.3 106.9L1075.8 109.5L1070.6 113.2Z" fill="#686868"/><g fill="none" stroke="#686868" stroke-width="2.1"><rect x="-7.6" y="-3.3" width="15.2" height="6.6" rx="3.3" transform="translate(1253.4 97.4) rotate(-45)"/><rect x="-7.6" y="-3.3" width="15.2" height="6.6" rx="3.3" transform="translate(1244.4 107.2) rotate(-45)"/></g><path d="M1249.4 114.6H1264.6V105.4H1249.4Z" fill="#fafafa"/><path d="M1250.9 113.5H1262a2.5 2.5 0 0 0 0-5a4 4 0 0 0-7.4-1.4a3.2 3.2 0 0 0-3.7 3.2z" fill="#686868"/><g fill="none" stroke="#686868"><rect x="1284.9" y="95" width="20" height="15" stroke-width="1.7"/><path d="M1285.3 95.4L1294.9 103.4L1304.5 95.4M1285.3 109.6L1291.5 103.2M1304.5 109.6L1298.3 103.2" stroke-width="1.1"/></g><clipPath id="uc"><circle cx="1339" cy="102.7" r="8.4"/></clipPath><circle cx="1339" cy="102.7" r="10.2" fill="#686868"/><g clip-path="url(#uc)"><ellipse cx="1339.2" cy="100.2" rx="3.5" ry="4.4" fill="#fafafa"/><path d="M1337.3 104H1341.1L1341.6 106.6C1345.5 107.6 1348 109 1349.5 111.5V114H1329V111.5C1330.5 109 1333 107.6 1336.8 106.6Z" fill="#fafafa"/></g><rect x="1343.2" y="106" width="8.8" height="8.8" fill="#fafafa"/><path d="M1347.5 106.8V113.8M1344 110.3H1351" stroke="#686868" stroke-width="2"/><g fill="none" stroke="#686868" stroke-width="2.2"><circle cx="1342.4" cy="148.9" r="7.4"/><path d="M1347.8 154.4L1352.2 158.9" stroke-width="2.5" stroke-linecap="round"/></g><path d="M1341.6 145.3V152.5L1338 148.9Z M1343.2 145.3V152.5L1346.8 148.9Z" fill="#686868"/><rect x="1329" y="173" width="28" height="1" fill="#cbcbcb"/><path d="M1334.3 187.3H1344.2L1348.5 191.6V205H1334.3Z" fill="#d5e9ee" stroke="#17878a" stroke-width="1.7" stroke-linejoin="round"/><path d="M1340.7 190.5C1340.9 193.5 1339.8 196.8 1337.3 200.4M1340.9 193.8C1342 196.5 1343.5 198.4 1345.6 199.6" fill="none" stroke="#17878a" stroke-width="0.9"/><circle cx="1348.8" cy="202.9" r="6.2" fill="#17878a"/><path d="M1345.4 202.9H1350.8M1348.6 200.5L1351.2 202.9L1348.6 205.3" fill="none" stroke="#fff" stroke-width="1.6"/><rect x="1333" y="233.1" width="20.1" height="7.7" rx="0.8" fill="#f3cfe2" stroke="#d13a7f" stroke-width="1.7"/><rect x="1333" y="245" width="8.8" height="7.8" rx="0.8" fill="#f3cfe2" stroke="#d13a7f" stroke-width="1.7"/><path d="M1345.7 245.3H1353.9M1345.7 248.4H1353.9M1345.7 251.5H1353.9" stroke="#d13a7f" stroke-width="1.1"/><path d="M1334.1 279H1343.8L1349 284.2V297.2H1334.1Z" fill="#f6dde0" stroke="#d6394c" stroke-width="1.7" stroke-linejoin="round"/><path d="M1340.5 282.5C1340.7 285.5 1339.6 288.8 1337.1 292.4M1340.7 285.8C1341.8 288.5 1343.3 290.4 1345.4 291.6" fill="none" stroke="#d6394c" stroke-width="0.9"/><circle cx="1349.4" cy="294.8" r="6.3" fill="#d6394c"/><path d="M1346.1 294.8H1352.7M1349.4 291.5V298.1" stroke="#fff" stroke-width="1.7"/><path d="M1334.2 324.8H1352A1.2 1.2 0 0 1 1353.2 326V339.4A1.2 1.2 0 0 1 1352 340.6H1342.6L1339.8 345.6V340.6H1334.2A1.2 1.2 0 0 1 1333 339.4V326A1.2 1.2 0 0 1 1334.2 324.8Z" fill="#d7ae1f"/><path d="M1337 331H1349.2M1337 334.7H1347.2" stroke="#fff" stroke-width="1.5"/><path d="M1332 370H1342.3V384H1332Z" fill="#fff" stroke="#5d5be0" stroke-width="1.7"/><path d="M1336.4 373.2C1336.6 375.4 1335.8 377.8 1334 380.3M1336.6 375.6C1337.4 377.6 1338.5 379 1340 379.8" fill="none" stroke="#5d5be0" stroke-width="0.8"/><path d="M1341.6 369.1H1350.5L1354.6 373.2V384.7H1341.6Z" fill="#5d5be0"/><path d="M1350.5 369.1V373.2H1354.6" fill="none" stroke="#f9f9f9" stroke-width="0.9"/><rect x="1340.4" y="378.5" width="4.4" height="8" fill="#5d5be0" stroke="#f9f9f9" stroke-width="0.8"/><path d="M1337.2 385.6H1348L1342.6 392.6Z" fill="#5d5be0"/><rect x="1345.3" y="418.1" width="7.8" height="17.2" rx="0.6" fill="#e2f0da" stroke="#73bf44" stroke-width="1.7"/><path d="M1334.3 426.8H1343M1334.3 435.4H1343M1334.3 426.8V435.4" fill="none" stroke="#73bf44" stroke-width="1.6" stroke-dasharray="1.6 1.2"/><path d="M1342.6 418L1337 423.3" stroke="#73bf44" stroke-width="1.8"/><path d="M1334 417.2V424.2H1341Z" fill="#73bf44"/><path d="M1336 463.8H1345.6L1350.8 469V482.2H1336Z" fill="#d5e9ee" stroke="#17878a" stroke-width="1.7" stroke-linejoin="round"/><path d="M1343.2 467.5C1343.4 470.5 1342.3 473.8 1339.8 477.4M1343.4 470.8C1344.5 473.5 1346 475.4 1348.1 476.6" fill="none" stroke="#17878a" stroke-width="1"/><path d="M1332.3 470.3L1335.6 473.2L1332.3 476.1M1354.5 470.3L1351.2 473.2L1354.5 476.1" fill="none" stroke="#17878a" stroke-width="1.7"/><path d="M1336.6 522.6L1348 511.2a2 2 0 0 1 2.8 0l0.8 0.8a2 2 0 0 1 0 2.8L1340.2 526.2Z" fill="#f5d3e6" stroke="#d2308a" stroke-width="1.7" stroke-linejoin="round"/><path d="M1335.7 523.4L1339.4 527.1H1334.2Z" fill="#d2308a"/><path d="M1344.3 521.8H1353.9V527.4H1341.6Z" fill="#d2308a"/><path d="M1343 555L1351.2 558.2V565.5C1351.2 570.3 1347.8 574 1343 575.9C1338.2 574 1334.8 570.3 1334.8 565.5V558.2Z" fill="#e6e4f8" stroke="#5b50d8" stroke-width="1.7" stroke-linejoin="round"/><path d="M1343 556.5V574.2C1346.6 572.5 1349.7 569.6 1349.7 565.5V559.2Z" fill="#f4f4fc"/><path d="M1335.2 602.2H1346.2L1350.6 606.6V620.8H1335.2Z" fill="#f3def6" stroke="#b235c4" stroke-width="1.7" stroke-linejoin="round"/><path d="M1338.4 606.4H1343.4M1338.4 608.9H1347.2M1338.4 611H1347.2" stroke="#b235c4" stroke-width="0.9"/><rect x="1338.6" y="613.2" width="2.2" height="4" rx="0.8" fill="#b235c4"/><path d="M1344.6 614.4L1347.4 617.2M1347.4 614.4L1344.6 617.2" stroke="#b235c4" stroke-width="1"/><clipPath id="pc"><rect x="1320" y="640" width="46" height="17"/></clipPath><g clip-path="url(#pc)"><path d="M1336.2 657.2L1346.6 647a2.6 2.6 0 0 1 3.7 0l0.4 0.4a2.6 2.6 0 0 1 0 3.7L1344 657.8Z" fill="#dccdf3" stroke="#7a58d0" stroke-width="1.7" stroke-linejoin="round"/></g><path d="M1337.8 665.8L1343.1 671L1348.4 665.8" fill="none" stroke="#686868" stroke-width="2"/><rect x="1328" y="681" width="29" height="1" fill="#cbcbcb"/><rect x="1339.4" y="697.4" width="2.5" height="15.3" rx="1.2" fill="#686868"/><path d="M1343.5 704.9H1351.5M1348.4 701.3L1352 704.9L1348.4 708.5" fill="none" stroke="#686868" stroke-width="2"/><path d="M6 422.3V432.4L12.1 427.3Z" fill="#5c5c5c"/><path d="M1312.8 422V432L1307 427Z" fill="#5c5c5c"/><path d="M1289.2 138.8L1292.5 135.2L1295.8 138.8" fill="none" stroke="#3c3c3c" stroke-width="1.7"/><path d="M1289 700.4L1292.5 704L1296 700.4" fill="none" stroke="#000" stroke-width="2.2"/><path d="M142 716.4L137.6 719.6L142 722.8" fill="none" stroke="#4a4a4a" stroke-width="2"/><path d="M1273.2 716.4L1277.6 719.6L1273.2 722.8" fill="none" stroke="#4a4a4a" stroke-width="2"/><path d="M15.9 741L22.1 740.1V747.1H15.9Z M23.1 739.9L32 738.7V747.1H23.1Z M15.9 748.1H22.1V755.1L15.9 754.2Z M23.1 748.1H32V756.5L23.1 755.3Z" fill="#fff"/><g fill="none" stroke="#111" stroke-width="1.1"><circle cx="70.4" cy="745.2" r="4.9"/><path d="M66.9 748.7L60.3 755.4"/></g><g fill="none" stroke="#fff" stroke-width="1"><path d="M408.5 739.9V742.2H418.7V739.9"/><rect x="408.5" y="744.6" width="10.2" height="6.3"/><path d="M408.5 755.2V752.9H418.7V755.2"/><path d="M422.6 739.9V743.5M422.6 747.5V755.2"/></g><rect x="421.2" y="744" width="2.8" height="3" fill="#fff"/><defs><linearGradient id="eg" x1="0" y1="1" x2="1" y2="0"><stop offset="0" stop-color="#1658b8"/><stop offset="0.4" stop-color="#1f8ae6"/><stop offset="0.68" stop-color="#33c0ec"/><stop offset="1" stop-color="#62d94e"/></linearGradient></defs><circle cx="467" cy="748" r="12" fill="url(#eg)"/><path d="M455.6 751.5C457.5 756.5 462 760 467 760C472.5 760 477 756.5 478.6 751.5C476 753.5 472 753.8 469.5 752.5C465.5 750.6 462 751.2 455.6 751.5Z" fill="#1a6fd0"/><ellipse cx="468.6" cy="748.6" rx="3.4" ry="2.8" fill="#123f86"/><path d="M505 739.3H512L514 741H526.2V756H505Z" fill="#f6c24e"/><rect x="505" y="742.5" width="21.2" height="13.5" fill="#fcd463"/><path d="M509.7 756V749.1H520.6V756H517.8V752.2H512.5V756Z" fill="#3b8fd8"/><defs><radialGradient id="ff" cx="0.55" cy="0.3" r="0.8"><stop offset="0" stop-color="#ffe34a"/><stop offset="0.45" stop-color="#ff8a2a"/><stop offset="1" stop-color="#f2304f"/></radialGradient></defs><path d="M565 759.3A11.2 11.2 0 0 1 554 747C554.3 744 555.5 741.5 557.2 739.8L557.6 742.3C558.5 740.8 559.5 740 560.6 739.6C560.4 740.8 560.6 741.8 561.2 742.4C562.8 740.8 565.5 739.8 567.5 740C567.5 738.2 568.8 736.6 570.3 735.9C574.2 738.8 576.3 743 576.2 748A11.2 11.2 0 0 1 565 759.3Z" fill="url(#ff)"/><circle cx="566" cy="749.4" r="4.3" fill="#8c3ce6"/><path d="M561.5 747.5C563 745.2 566.5 744.6 569 746.4" fill="none" stroke="#ffb83a" stroke-width="1.4"/><circle cx="614" cy="747.7" r="11.3" fill="#dd4a3b"/><path d="M614 747.7L624.5 744A11.3 11.3 0 0 1 609.5 758.1Z" fill="#f6c11d"/><path d="M614 747.7L609.5 758.1A11.3 11.3 0 0 1 603.2 742.5L607 744.8Z" fill="#24a04a"/><circle cx="614" cy="747.7" r="5" fill="#fff"/><circle cx="614" cy="747.7" r="3.9" fill="#3d7fe6"/><defs><linearGradient id="bb" x1="0" y1="0" x2="0" y2="1"><stop offset="0" stop-color="#b4d8f0"/><stop offset="1" stop-color="#78acd8"/></linearGradient></defs><rect x="651.1" y="736.6" width="24.2" height="22.3" rx="2.5" fill="url(#bb)"/><circle cx="663.2" cy="747.6" r="9.2" fill="none" stroke="#1e4f90" stroke-width="1.8"/><circle cx="663.2" cy="747.4" r="7.6" fill="#a8d2ee"/><ellipse cx="663.8" cy="746.6" rx="7.4" ry="3.9" transform="rotate(-38 663.8 746.6)" fill="#e84848"/><defs><linearGradient id="wd" x1="0" y1="0" x2="1" y2="1"><stop offset="0" stop-color="#ffffff"/><stop offset="1" stop-color="#b8d4f0"/></linearGradient></defs><path d="M702.5 736.4H721.8V756.9H700.6V738.4Z" fill="url(#wd)"/><text x="703.4" y="751.6" font-size="16.4" font-weight="700" fill="#1f5cb4" textLength="13.8" lengthAdjust="spacingAndGlyphs">W</text><path d="M714 751L721 749V756.6H714Z" fill="#e8eef5"/><rect x="737" y="728" width="48" height="40" fill="#485470"/><rect x="750" y="736.6" width="22" height="21.6" rx="3" fill="#c40d0c"/><path d="M761 740.5C759.5 740.5 760 744 761.5 747C759.5 751.5 756.5 755 755.3 754.3C754.3 753.5 757.5 750.5 763 749.5C766.5 748.8 770 749.5 769.3 750.5C768.6 751.5 764.5 749.5 762.2 746.5C761.2 744.5 762.2 740.5 761 740.5Z" fill="none" stroke="#fff" stroke-width="1.4"/><defs><linearGradient id="xl" x1="0" y1="0" x2="1" y2="1"><stop offset="0" stop-color="#c8e6a0"/><stop offset="1" stop-color="#f4faee"/></linearGradient></defs><path d="M800.4 736.2H819.9V757.1H798.3V738.3Z" fill="url(#xl)"/><text x="800.6" y="752.4" font-size="16.4" font-weight="700" fill="#3a9a20" textLength="12.4" lengthAdjust="spacingAndGlyphs">X</text><path d="M812 752L819.6 749.5V756.8H812Z" fill="#e8f2e0"/><rect x="495.9" y="766" width="31.399999999999977" height="2" fill="#7fb7e6"/><rect x="594" y="766" width="40" height="2" fill="#7fb7e6"/><rect x="643" y="766" width="40" height="2" fill="#7fb7e6"/><rect x="692.2" y="766" width="39.89999999999998" height="2" fill="#7fb7e6"/><rect x="737" y="766" width="48" height="2" fill="#7fb7e6"/><rect x="790" y="766" width="40.10000000000002" height="2" fill="#7fb7e6"/><rect x="527.3" y="766" width="8.8" height="2" fill="#5f88b8"/><path d="M1010 751.8A3.4 3.4 0 0 1 1009.6 745A5.6 5.6 0 0 1 1020.4 743.2A4.4 4.4 0 0 1 1024.3 751.8Z" fill="#dceaf6"/><path d="M1016.4 740.5A5.2 5.2 0 0 1 1027.4 744.8A3.6 3.6 0 0 1 1024.5 751.8" fill="#c4dcf0"/><path d="M1011.5 752.5V757.5M1021.2 752.2L1022.5 754.5" stroke="#9cc2e8" stroke-width="1.6"/><path d="M1129.2 751L1135 744.8L1140.8 751" fill="none" stroke="#fff" stroke-width="1.1"/><g fill="none" stroke="#fff" stroke-width="1.1"><rect x="1154.5" y="745" width="7.5" height="7" rx="1.2"/><path d="M1162 747.5L1165 745.6V752.2L1162 750.3"/><path d="M1155.5 741.5A7 4 0 0 1 1163.5 741.5M1155.5 755.5A7 4 0 0 0 1163.5 755.5"/></g><g fill="none" stroke="#fff" stroke-width="1.1"><path d="M1178.6 754.6A10.4 10.4 0 0 1 1189 744.2" stroke="#9aa4b8"/><path d="M1181.3 754.6A7.7 7.7 0 0 1 1189 746.9"/><path d="M1184 754.6A5 5 0 0 1 1189 749.6"/></g><circle cx="1188.8" cy="753.7" r="1.3" fill="#fff"/><g fill="none" stroke="#fff" stroke-width="1.1"><rect x="1203.6" y="745" width="10.2" height="7.5"/><path d="M1200 743.6V746.2H1202.8V743.6M1201.4 746.2V749.2M1201.4 749.2L1203.6 749.2"/></g><rect x="1214" y="747" width="1.2" height="3.4" fill="#fff"/><rect x="1205" y="746.4" width="6" height="4.7" fill="#ddd"/><g fill="none" stroke="#fff" stroke-width="1.1"><path d="M1223.3 745.3H1226.2L1230.4 741.8V754L1226.2 750.5H1223.3Z"/><path d="M1232.6 745.6A3.3 3.3 0 0 1 1232.6 750.3"/><path d="M1234.8 743.2A6.6 6.6 0 0 1 1234.8 752.7" stroke="#aab3c4"/><path d="M1237 741.4A9.4 9.4 0 0 1 1237 754.5" stroke="#7a849a"/></g><path d="M1325 740H1341V752.8H1331.5L1328.5 755.6V752.8H1325Z" fill="#fff"/><path d="M1327.8 743.6H1338.2M1327.8 746.6H1338.2M1327.8 749.6H1334" stroke="#222" stroke-width="0.9"/><circle cx="1340.6" cy="755.2" r="7.6" fill="#3b3b3f" stroke="#8b8e96" stroke-width="1"/><text x="1340.6" y="759.6" font-size="11.5" font-weight="700" fill="#fff" text-anchor="middle">4</text><rect x="1361" y="728" width="1" height="40" fill="#6a7280"/><g font-size="12" fill="#1a1a1a"><text x="23.2" y="15.6" font-size="12.4" textLength="275.6" lengthAdjust="spacingAndGlyphs">20211008 PA.pdf - Adobe Acrobat Reader DC (64-bit)</text></g><g font-size="12" fill="#3c3c3c"><text x="7.4" y="36.6" textLength="17.6" lengthAdjust="spacingAndGlyphs">File</text><text x="39" y="36.6" textLength="19.9" lengthAdjust="spacingAndGlyphs">Edit</text><text x="73.5" y="36.6" textLength="24" lengthAdjust="spacingAndGlyphs">View</text><text x="112.5" y="36.6" textLength="21.9" lengthAdjust="spacingAndGlyphs">Sign</text><text x="149.4" y="36.6" textLength="43.9" lengthAdjust="spacingAndGlyphs">Window</text><text x="207.4" y="36.6" textLength="23.6" lengthAdjust="spacingAndGlyphs">Help</text></g><g font-size="15.5" fill="#505050"><text x="16.4" y="66.9" textLength="41.3" lengthAdjust="spacingAndGlyphs">Home</text><text x="88.4" y="66.9" textLength="34" lengthAdjust="spacingAndGlyphs">Tools</text><text x="188.4" y="66.9" fill="#3c3c3c" textLength="107" lengthAdjust="spacingAndGlyphs">20211008 PA.pdf</text></g><text x="361" y="107.5" font-size="12" fill="#505050" text-anchor="middle">1</text><text x="380.6" y="107.5" font-size="12" fill="#505050">/</text><text x="391.6" y="107.5" font-size="12" fill="#505050">11</text><text x="630" y="107.5" font-size="12" fill="#505050" textLength="28" lengthAdjust="spacingAndGlyphs">100%</text><text x="38.2" y="723.7" font-size="11.6" fill="#222" textLength="72.5" lengthAdjust="spacingAndGlyphs">11,69 x 8,27 in</text><text x="88.1" y="753.6" font-size="14.4" fill="#333" textLength="127.1" lengthAdjust="spacingAndGlyphs">Type here to search</text><text x="1038.7" y="753.7" font-size="14.2" fill="#e4e6ea" textLength="27.6" lengthAdjust="spacingAndGlyphs">30°C</text><text x="1075.6" y="753.7" font-size="14.2" fill="#e4e6ea" textLength="34.7" lengthAdjust="spacingAndGlyphs">Hujan</text><text x="1264.9" y="742.8" font-size="11.2" fill="#fff" textLength="25.8" lengthAdjust="spacingAndGlyphs">14:04</text><text x="1248.8" y="760.7" font-size="11.4" fill="#fff" textLength="57.6" lengthAdjust="spacingAndGlyphs">06/01/2022</text></svg></body></html>
